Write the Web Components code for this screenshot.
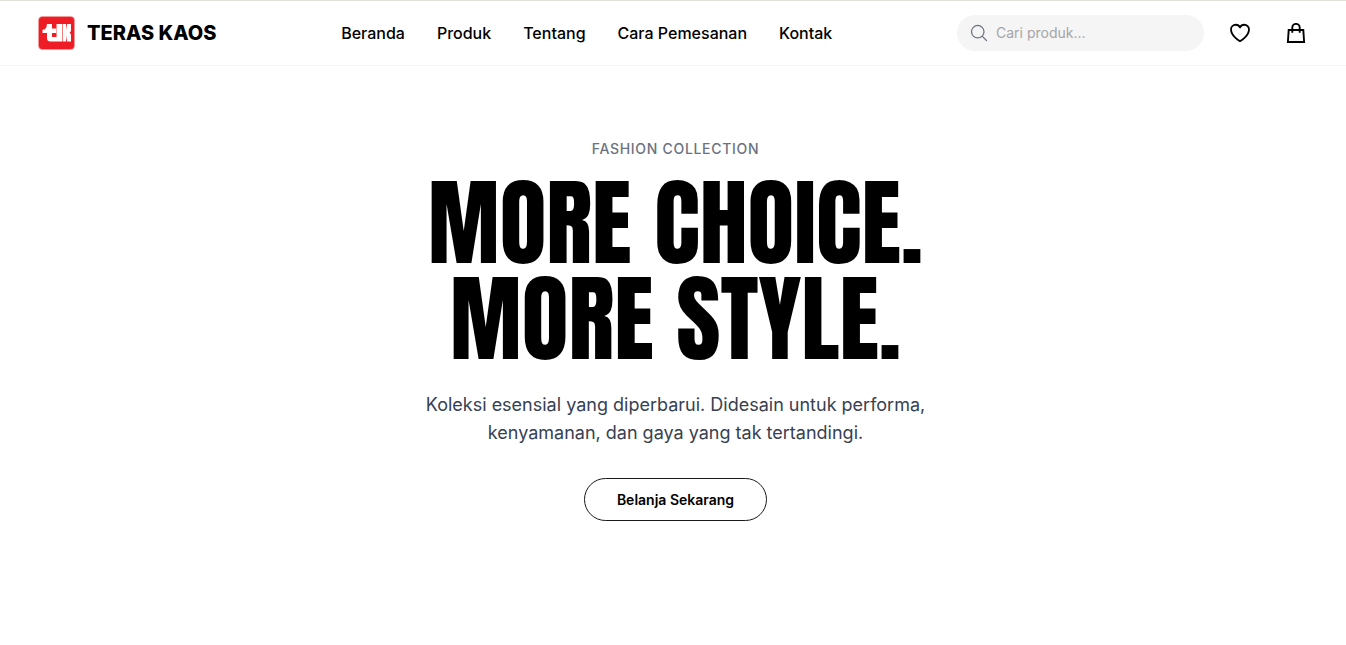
<!DOCTYPE html>
<html lang="id">
<head>
<meta charset="utf-8">
<meta name="viewport" content="width=device-width, initial-scale=1">
<title>Teras Kaos</title>
<style>
body { margin: 0; background: #fff; color: #000; font-family: Inter, "Liberation Sans", sans-serif; }
</style>
</head>
<body>
<site-header>
  <brand-logo slot="brand">TERAS KAOS</brand-logo>
  <nav-link slot="nav" to="#beranda">Beranda</nav-link>
  <nav-link slot="nav" to="#produk">Produk</nav-link>
  <nav-link slot="nav" to="#tentang">Tentang</nav-link>
  <nav-link slot="nav" to="#cara">Cara Pemesanan</nav-link>
  <nav-link slot="nav" to="#kontak">Kontak</nav-link>
  <search-field slot="tools" placeholder="Cari produk..."></search-field>
  <icon-button slot="tools" label="Favorit"><svg width="24" height="24" viewBox="0 0 24 24" fill="none" stroke="#000" stroke-width="1.8" stroke-linecap="round" stroke-linejoin="round"><path d="M21 8.25c0-2.485-2.099-4.5-4.688-4.5-1.935 0-3.597 1.126-4.312 2.733-.715-1.607-2.377-2.733-4.313-2.733C5.1 3.75 3 5.765 3 8.25c0 7.22 9 12 9 12s9-4.78 9-12Z"/></svg></icon-button>
  <icon-button slot="tools" label="Keranjang"><svg width="24" height="24" viewBox="0 0 24 24" fill="none" stroke="#000" stroke-width="1.9"><path d="M4.700 9h14.600l.8 12H3.900L4.700 9Z"/><path d="M8.300 11.800V6.600a3.700 3.700 0 0 1 7.400 0v5.200"/></svg></icon-button>
</site-header>
<main>
  <hero-banner>
    <span slot="eyebrow">FASHION COLLECTION</span>
    <span slot="title">MORE CHOICE.<br>MORE STYLE.</span>
    <span slot="text">Koleksi esensial yang diperbarui. Didesain untuk performa, kenyamanan, dan gaya yang tak tertandingi.</span>
    <pill-button slot="action">Belanja Sekarang</pill-button>
  </hero-banner>
</main>
<script>
const define = (name, html, setup) => {
  const template = document.createElement('template');
  template.innerHTML = html;
  customElements.define(name, class extends HTMLElement {
    constructor() {
      super();
      this.attachShadow({ mode: 'open' }).append(template.content.cloneNode(true));
    }
    connectedCallback() {
      if (setup) setup(this, this.shadowRoot);
    }
  });
};

define('site-header', `
<style>
:host { display: block; border-top: 1px solid #dfe4d8; border-bottom: 1px solid #f5f5f5; background: #fff; }
header { display: flex; align-items: center; justify-content: space-between; height: 64px; padding: 0 30px 0 38px; }
nav { display: flex; gap: 32px; }
.tools { display: flex; align-items: center; gap: 16px; }
</style>
<header>
  <slot name="brand"></slot>
  <nav aria-label="Utama"><slot name="nav"></slot></nav>
  <div class="tools"><slot name="tools"></slot></div>
</header>`);

define('brand-logo', `
<style>
:host { display: block; }
a { display: flex; align-items: center; gap: 12px; color: inherit; text-decoration: none; font-size: 20px; line-height: 28px; font-weight: 800; white-space: nowrap; }
svg { display: block; }
</style>
<a href="#beranda">
  <svg width="37" height="34" viewBox="0 0 37 34" aria-hidden="true">
    <rect x=".5" y=".5" width="36" height="33" rx="4" fill="#ee1c25" stroke="#f6a3a0" stroke-width=".6"/>
    <path fill="#fff" d="M9 8h5v4.500h4.500v4.500H14v4h4.500V8H24v17.500H12.500q-3.500 0-3.500-3.500v-5H4.500v-3.200q4 0 4.500-5.800Z"/>
    <path fill="#fff" d="M24.800 8h3.200v6l1-6h4v7l-1.300 1.700 1.300 1.800v7h-4l-1-6v6h-3.200z"/>
    <path stroke="#f38a86" stroke-width=".8" d="M18.600 8v13M24.500 8v17.500"/>
  </svg>
  <slot></slot>
</a>`);

define('nav-link', `
<style>
:host { display: block; }
a { color: inherit; text-decoration: none; font-size: 16px; line-height: 24px; font-weight: 500; white-space: nowrap; }
</style>
<a><slot></slot></a>`, (host, root) => {
  root.querySelector('a').href = host.getAttribute('to');
});

define('search-field', `
<style>
:host { display: block; }
label { display: flex; align-items: center; gap: 7px; box-sizing: border-box; width: 247px; height: 36px; padding: 0 12px; border-radius: 18px; background: #f5f5f5; }
svg { flex: none; display: block; }
input { flex: 1; min-width: 0; padding: 0; border: 0; outline: 0; background: none; color: #000; font: 400 14px/20px Inter, "Liberation Sans", sans-serif; }
input::placeholder { color: #a5a5a8; opacity: 1; }
</style>
<label>
  <svg width="20" height="20" viewBox="0 0 24 24" fill="none" stroke="#6b7280" stroke-width="1.5" stroke-linecap="round" aria-hidden="true"><path d="m21 21-5.197-5.197m0 0A7.5 7.5 0 1 0 5.196 5.196a7.5 7.5 0 0 0 10.607 10.607Z"/></svg>
  <input type="search">
</label>`, (host, root) => {
  const input = root.querySelector('input');
  input.placeholder = host.getAttribute('placeholder');
  input.setAttribute('aria-label', 'Cari produk');
});

define('icon-button', `
<style>
:host { display: block; }
button { display: block; padding: 8px; border: 0; border-radius: 50%; background: none; cursor: pointer; }
::slotted(svg) { display: block; }
</style>
<button type="button"><slot></slot></button>`, (host, root) => {
  root.querySelector('button').setAttribute('aria-label', host.getAttribute('label'));
});

define('hero-banner', `
<style>
:host { display: block; }
section { display: flex; flex-direction: column; align-items: center; padding: 73px 16px 124px 21px; text-align: center; }
p, h1 { margin: 0; }
.eyebrow { color: #6b7280; font-size: 14px; line-height: 20px; font-weight: 500; letter-spacing: 0.05em; }
h1 { margin-top: 16px; font-family: Anton, Impact, "Liberation Sans Narrow", Inter, sans-serif; font-size: 96px; line-height: 96px; font-weight: 400; }
.text { max-width: 512px; margin: 24px 0 31px; color: #374151; font-size: 18px; line-height: 28px; }
</style>
<section>
  <p class="eyebrow"><slot name="eyebrow"></slot></p>
  <h1><slot name="title"></slot></h1>
  <p class="text"><slot name="text"></slot></p>
  <slot name="action"></slot>
</section>`);

define('pill-button', `
<style>
:host { display: block; }
button { padding: 11px 32px; height: 43px; border: 1px solid #18181b; border-radius: 22px; background: #fff; color: #000; font: 600 14px/20px Inter, "Liberation Sans", sans-serif; cursor: pointer; }
</style>
<button type="button"><slot></slot></button>`);
</script>
</body>
</html>
